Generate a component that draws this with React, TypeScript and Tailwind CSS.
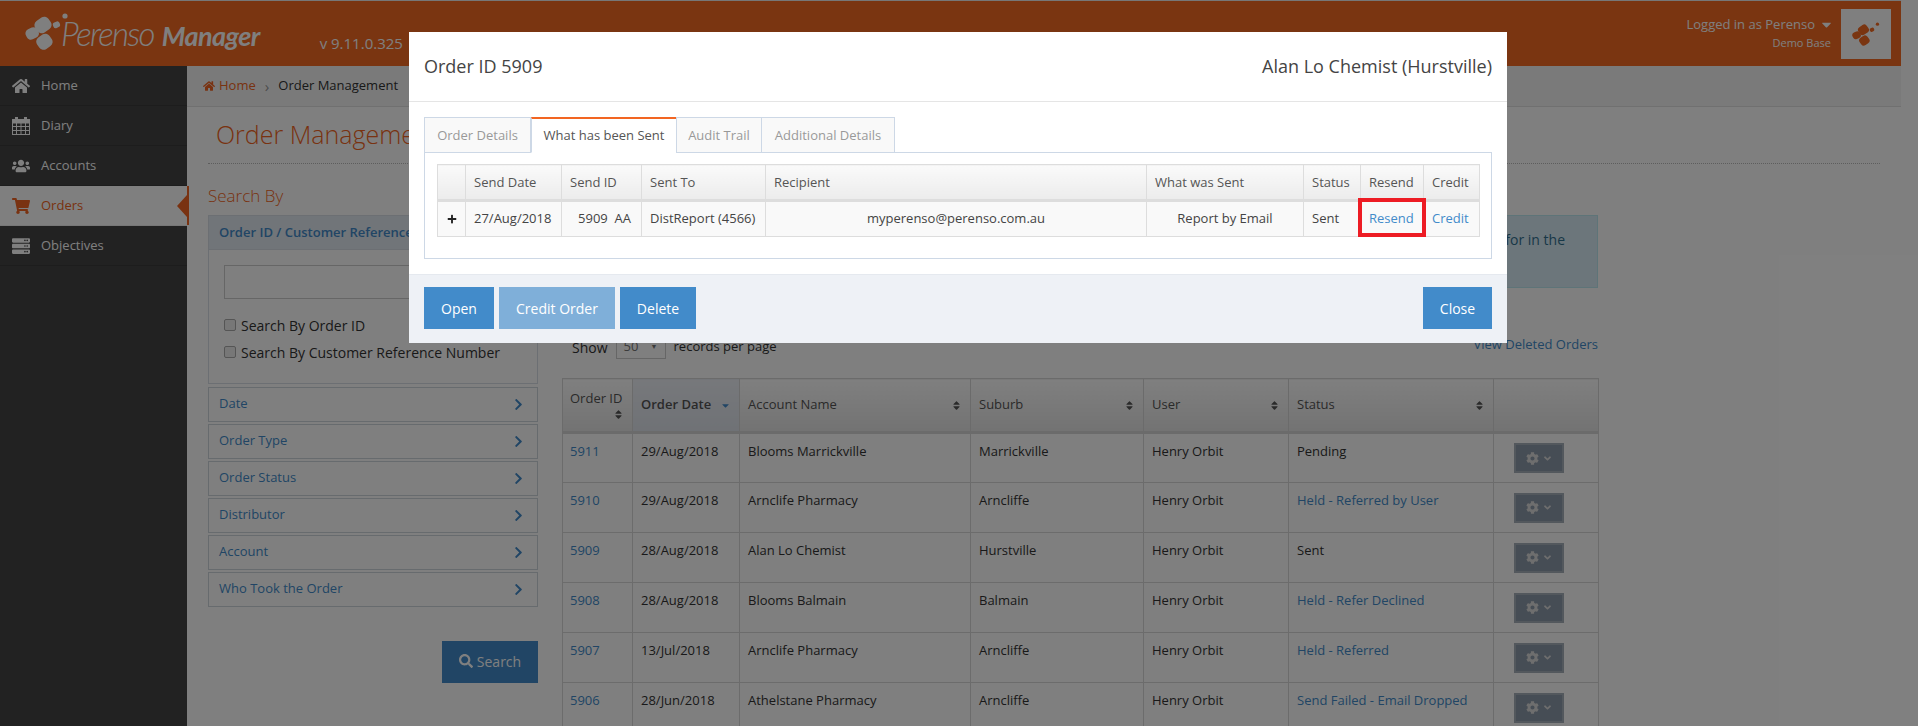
import { FaHome, FaUsers, FaShoppingCart, FaServer, FaSearch, FaCog, FaChevronRight, FaSort, FaPlus, FaCaretDown, FaAngleDown } from "react-icons/fa";
import type { ComponentType } from "react";

function Logo({ className, color }: { className: string; color: string }) {
  return (
    <svg viewBox="0 0 44 37" className={className} fill={color}>
      <rect x="0.5" y="15" width="13" height="11" rx="4.5" transform="rotate(-25 7 20)" />
      <rect x="10" y="5" width="16" height="14" rx="5" transform="rotate(-35 18 12)" />
      <rect x="12" y="22" width="15" height="14" rx="5" transform="rotate(-35 19 29)" />
      <rect x="28" y="9" width="7" height="6" rx="2.5" transform="rotate(-25 31 12)" />
      <circle cx="40" cy="3" r="2.6" />
    </svg>
  );
}

function DiaryIcon({ className }: { className?: string }) {
  return (
    <svg viewBox="0 0 18 18" className={className} fill="none" stroke="currentColor" strokeWidth="1">
      <rect x="0.5" y="2.5" width="17" height="15" />
      <rect x="0.5" y="2.5" width="17" height="3.5" fill="currentColor" />
      <path d="M0.5 9.5h17M0.5 13.5h17M4.5 6v11.5M9 6v11.5M13.5 6v11.5" />
      <rect x="3.5" y="0.5" width="2" height="3.5" fill="currentColor" />
      <rect x="12.5" y="0.5" width="2" height="3.5" fill="currentColor" />
    </svg>
  );
}

const nav: { label: string; Icon: ComponentType<{ className?: string }>; active?: boolean }[] = [
  { label: "Home", Icon: FaHome },
  { label: "Diary", Icon: DiaryIcon },
  { label: "Accounts", Icon: FaUsers },
  { label: "Orders", Icon: FaShoppingCart, active: true },
  { label: "Objectives", Icon: FaServer },
];

const filters = ["Date", "Order Type", "Order Status", "Distributor", "Account", "Who Took the Order"];

const rows = [
  ["5911", "29/Aug/2018", "Blooms Marrickville", "Marrickville", "Pending", false],
  ["5910", "29/Aug/2018", "Arnclife Pharmacy", "Arncliffe", "Held - Referred by User", true],
  ["5909", "28/Aug/2018", "Alan Lo Chemist", "Hurstville", "Sent", false],
  ["5908", "28/Aug/2018", "Blooms Balmain", "Balmain", "Held - Refer Declined", true],
  ["5907", "13/Jul/2018", "Arnclife Pharmacy", "Arncliffe", "Held - Referred", true],
  ["5906", "28/Jun/2018", "Athelstane Pharmacy", "Arncliffe", "Send Failed - Email Dropped", true],
] as const;

const th = "h-[54px] border border-[#d6d6d6] border-b-[3px] px-2 text-left align-middle font-medium text-[#555]";
const thBg = " bg-gradient-to-b from-white to-[#e6e6e6]";
const mth = "h-[36px] whitespace-nowrap border border-[#ddd] border-b-[3px] bg-gradient-to-b from-[#fafafa] to-[#ececec] px-[8px] pt-[2px] text-left font-normal text-[#555]";
const mtd = "h-[36px] whitespace-nowrap border border-[#ddd] bg-[#f9f9f9] px-[8px]";
const td = "border border-[#d8d8d8] px-2 pt-[8px] align-top";

export default function App() {
  return (
    <div className="relative h-[726px] w-[1918px] overflow-hidden bg-white text-[13px] text-[#333] [font-family:'Open_Sans',sans-serif]">
      <div className="flex h-full w-[1901px] flex-col border-t border-[#eee]">
        <header className="flex h-[65px] shrink-0 items-center bg-[#f46a22] pr-[10px] text-white">
          <Logo className="ml-[25px] mb-[4px] h-[37px] w-[44px]" color="#fff" />
          <div className="-ml-[8px] flex items-baseline text-[33px] leading-none tracking-[-1.7px] [font-family:Lato,sans-serif]">
            <span className="font-light italic">Perenso</span>
            <span className="ml-[8px] text-[27px] font-bold italic tracking-[-0.6px]">Manager</span>
          </div>
          <span className="ml-[60px] mt-[20px] text-[15px]">v 9.11.0.325</span>
          <div className="ml-auto mr-[10px] text-right">
            <div className="-mr-[3px] flex items-center justify-end text-[13px] leading-[18px]">
              Logged in as Perenso <FaCaretDown className="ml-[4px] text-[15px]" />
            </div>
            <div className="mt-[1px] text-[11px] leading-[18px]">Demo Base</div>
          </div>
          <div className="flex h-[50px] w-[50px] items-center justify-center bg-white">
            <Logo className="h-[24px] w-[28px]" color="#f46a22" />
          </div>
        </header>

        <div className="flex min-h-0 flex-1">
          <aside className="w-[187px] shrink-0 bg-[#444] text-white">
            {nav.map(({ label, Icon, active }) => (
              <div
                key={label}
                className={
                  "relative flex h-[40px] items-center border-b pl-[12px] " +
                  (active ? "border-[#eee] bg-white font-medium text-[#f26522]" : "border-[#3a3a3a]")
                }
              >
                <Icon className="h-[18px] w-[18px]" />
                <span className="ml-[11px]">{label}</span>
                {active && (
                  <span className="absolute right-[-2px] top-0 flex h-full items-center border-r-2 border-[#f26522]">
                    <span className="h-0 w-0 border-y-[11px] border-r-[10px] border-y-transparent border-r-[#f26522]" />
                  </span>
                )}
              </div>
            ))}
          </aside>

          <main className="min-w-0 flex-1">
            <div className="flex h-[41px] items-center border-b border-[#e0e0e0] bg-[#f5f5f5] pl-[16px]">
              <FaHome className="text-[12px] text-[#f26522]" />
              <span className="ml-[4px] text-[#f26522]">Home</span>
              <span className="mx-[9px] text-[15px] leading-none text-[#999]">›</span>
              <span>Order Management</span>
            </div>
            <div className="mx-[21px] h-[57px] border-b border-dotted border-[#bbb] pl-[8px] pt-[11px] text-[25px] font-light leading-[33px] text-[#f26522]">
              Order Management
            </div>

            <div className="ml-[21px] flex gap-[24px]">
              <div className="w-[330px]">
                <div className="mt-[21px] text-[17px] font-light leading-[22px] text-[#f26522]">Search By</div>
                <div className="mt-[8px] h-[169px] border border-[#d8dfe6] bg-white">
                  <div className="flex h-[34px] items-center border-b border-[#d8dfe6] bg-[#e2eaf2] pl-[10px] font-semibold text-[#428bca]">
                    Order ID / Customer Reference
                  </div>
                  <div className="px-[15px] pt-[15px] text-[14px]">
                    <div className="h-[34px] border border-[#ccc] bg-white" />
                    <label className="mt-[19px] flex h-[14px] items-center gap-[5px]">
                      <span className="h-[12px] w-[12px] rounded-[2px] border border-[#aaa] bg-[#eee]" />
                      Search By Order ID
                    </label>
                    <label className="mt-[13px] flex h-[14px] items-center gap-[5px]">
                      <span className="h-[12px] w-[12px] rounded-[2px] border border-[#aaa] bg-[#eee]" />
                      Search By Customer Reference Number
                    </label>
                  </div>
                </div>
                <div className="mt-[3px] flex flex-col gap-[2px]">
                  {filters.map((f) => (
                    <div key={f} className="flex h-[35px] items-center justify-between border border-[#cfd6dd] pb-[1px] pl-[10px] pr-[12px] text-[#428bca]">
                      {f}
                      <FaChevronRight className="text-[13px] text-[#428bca]" />
                    </div>
                  ))}
                </div>
                <div className="mt-[34px] flex justify-end">
                  <button className="flex h-[42px] w-[96px] items-center justify-center gap-[4px] pb-[2px] bg-[#428bca] text-[14px] text-white">
                    <FaSearch className="text-[14px]" /> Search
                  </button>
                </div>
              </div>

              <div className="w-[1036px]">
                <div className="mt-[51px] h-[73px] border border-[#bce8f1] bg-[#d9edf7] pr-[32px] pt-[15px] text-right text-[14px] leading-[18px] text-[#31708f]">
                  Enter the details of the order that you are searching for in the
                </div>
                <div className="mt-[48px] flex h-[22px] items-center pl-[10px]">
                  <span className="text-[14px]">Show</span>
                  <span className="ml-[8px] flex h-[24px] w-[50px] items-center justify-between border border-[#ccc] px-[7px] text-[13px] text-[#777]">
                    50 <span className="text-[7px]">▼</span>
                  </span>
                  <span className="ml-[8px]">records per page</span>
                  <span className="mb-[4px] ml-auto text-[#428bca]">View Deleted Orders</span>
                </div>
                <table className="mt-[20px] w-[1036px] table-fixed border-collapse">
                  <colgroup>
                    <col className="w-[70px]" />
                    <col className="w-[107px]" />
                    <col className="w-[231px]" />
                    <col className="w-[173px]" />
                    <col className="w-[145px]" />
                    <col className="w-[205px]" />
                    <col className="w-[105px]" />
                  </colgroup>
                  <thead>
                    <tr>
                      <th className={th + thBg + " !px-[7px] leading-[17px]"}>
                        Order ID
                        <FaSort className="ml-auto mr-[1px] mt-[2px] text-[11px]" />
                      </th>
                      <th className={th + " bg-gradient-to-b from-[#eef1f7] to-[#dfe4ec] font-semibold"}>
                        <span className="flex items-center justify-between">
                          Order Date <FaCaretDown className="text-[11px] text-[#428bca]" />
                        </span>
                      </th>
                      {["Account Name", "Suburb", "User", "Status"].map((h) => (
                        <th key={h} className={th + thBg}>
                          <span className="flex items-center justify-between">
                            {h} <FaSort className="text-[11px]" />
                          </span>
                        </th>
                      ))}
                      <th className={th + thBg} />
                    </tr>
                  </thead>
                  <tbody>
                    {rows.map(([id, date, acc, sub, status, link]) => (
                      <tr key={id}>
                        <td className={td + " h-[50px] !px-[7px] text-[#428bca]"}>{id}</td>
                        <td className={td}>{date}</td>
                        <td className={td}>{acc}</td>
                        <td className={td}>{sub}</td>
                        <td className={td}>Henry Orbit</td>
                        <td className={td + (link ? " text-[#428bca]" : "")}>{status}</td>
                        <td className="border border-[#d8d8d8] align-middle">
                          <span className="ml-[20px] flex h-[30px] w-[50px] items-center justify-center gap-[3px] border-2 border-[#a6b0bb] bg-[#8c9aaa] text-[#ddd]">
                            <FaCog className="text-[13px]" />
                            <FaAngleDown className="text-[11px]" />
                          </span>
                        </td>
                      </tr>
                    ))}
                  </tbody>
                </table>
              </div>
            </div>
          </main>
        </div>
      </div>

      {/* backdrop */}
      <div className="absolute inset-0 bg-black/50" />

      {/* dialog */}
      <div className="absolute left-[409px] top-[32px] flex h-[311px] w-[1098px] flex-col bg-white">
        <div className="flex h-[70px] shrink-0 items-center justify-between border-b border-[#e5e5e5] px-[15px] text-[18px] text-[#444]">
          <span>Order ID 5909</span>
          <span>Alan Lo Chemist (Hurstville)</span>
        </div>
        <div className="h-[172px] shrink-0 px-[15px] pt-[15px]">
          <div className="flex h-[36px]">
            {[
              ["Order Details", "w-[107px]"],
              ["What has been Sent", "w-[146px]"],
              ["Audit Trail", "w-[86px]"],
              ["Additional Details", "w-[134px]"],
            ].map(([t, w]) => {
              const on = t === "What has been Sent";
              return (
                <div
                  key={t}
                  className={
                    w + " relative z-10 flex items-center justify-center whitespace-nowrap border border-[#cdd8e6] " +
                    (on
                      ? "border-t-2 border-b-white border-t-[#f26522] bg-white text-[#555]"
                      : "-ml-px bg-[#f9f9f9] pt-[2px] text-[#999] first:ml-0")
                  }
                >
                  {t}
                </div>
              );
            })}
          </div>
          <div className="-mt-px h-[107px] border border-[#cdd8e6] px-[12px] pt-[11px]">
            <div className="relative">
              <table className="w-[1042px] table-fixed border-collapse">
                <colgroup>
                  <col className="w-[28px]" />
                  <col className="w-[96px]" />
                  <col className="w-[80px]" />
                  <col className="w-[124px]" />
                  <col className="w-[381px]" />
                  <col className="w-[157px]" />
                  <col className="w-[57px]" />
                  <col className="w-[63px]" />
                  <col className="w-[56px]" />
                </colgroup>
                <thead>
                  <tr>
                    {["", "Send Date", "Send ID", "Sent To", "Recipient", "What was Sent", "Status", "Resend", "Credit"].map((h, i) => (
                      <th key={i} className={mth}>{h}</th>
                    ))}
                  </tr>
                </thead>
                <tbody className="text-[#444]">
                  <tr>
                    <td className={mtd + " text-center"}><FaPlus className="mx-auto text-[10px] text-[#222]" /></td>
                    <td className={mtd}>27/Aug/2018</td>
                    <td className={mtd + " !pr-[10px] text-right"}>5909&nbsp;&nbsp;AA</td>
                    <td className={mtd}>DistReport (4566)</td>
                    <td className={mtd + " text-center"}>myperenso@perenso.com.au</td>
                    <td className={mtd + " text-center"}>Report by Email</td>
                    <td className={mtd}>Sent</td>
                    <td className={mtd + " text-[#428bca]"}>Resend</td>
                    <td className={mtd + " text-[#428bca]"}>Credit</td>
                  </tr>
                </tbody>
              </table>
              <div className="absolute left-[921px] top-[34px] h-[39px] w-[68px] border-[4px] border-[#ed1c24]" />
            </div>
          </div>
        </div>
        <div className="flex min-h-0 flex-1 items-start gap-[5px] border-t border-[#e5e9ef] bg-[#eef1f6] px-[15px] pt-[12px] text-[14px]">
          <button className="h-[42px] w-[70px] bg-[#428bca] text-white">Open</button>
          <button className="h-[42px] w-[116px] bg-[#7fafd9] text-white">Credit Order</button>
          <button className="h-[42px] w-[76px] bg-[#428bca] text-white">Delete</button>
          <button className="ml-auto h-[42px] w-[69px] bg-[#428bca] text-white">Close</button>
        </div>
      </div>
    </div>
  );
}
